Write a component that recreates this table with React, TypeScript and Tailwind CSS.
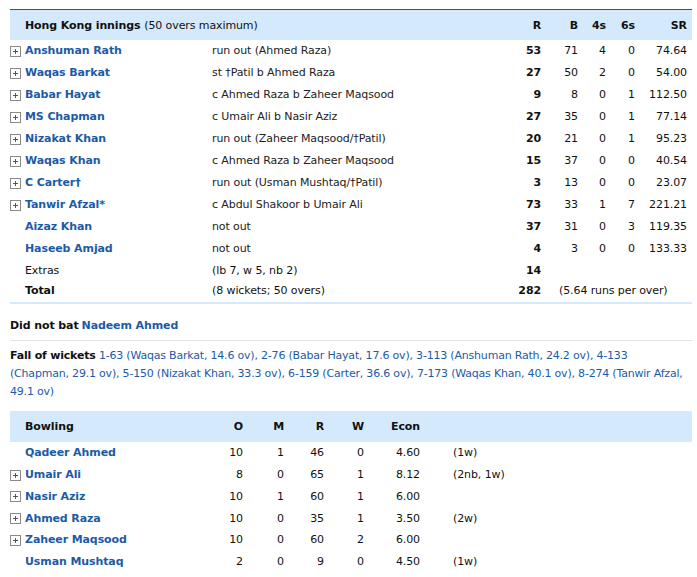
const LINK = 'text-[#1d5aa6]';

type Bat = { name: string; how: string; r: string; b: string; f: string; s: string; sr: string; plus: boolean };

const batting: Bat[] = [
  { name: 'Anshuman Rath', how: 'run out (Ahmed Raza)', r: '53', b: '71', f: '4', s: '0', sr: '74.64', plus: true },
  { name: 'Waqas Barkat', how: 'st †Patil b Ahmed Raza', r: '27', b: '50', f: '2', s: '0', sr: '54.00', plus: true },
  { name: 'Babar Hayat', how: 'c Ahmed Raza b Zaheer Maqsood', r: '9', b: '8', f: '0', s: '1', sr: '112.50', plus: true },
  { name: 'MS Chapman', how: 'c Umair Ali b Nasir Aziz', r: '27', b: '35', f: '0', s: '1', sr: '77.14', plus: true },
  { name: 'Nizakat Khan', how: 'run out (Zaheer Maqsood/†Patil)', r: '20', b: '21', f: '0', s: '1', sr: '95.23', plus: true },
  { name: 'Waqas Khan', how: 'c Ahmed Raza b Zaheer Maqsood', r: '15', b: '37', f: '0', s: '0', sr: '40.54', plus: true },
  { name: 'C Carter†', how: 'run out (Usman Mushtaq/†Patil)', r: '3', b: '13', f: '0', s: '0', sr: '23.07', plus: true },
  { name: 'Tanwir Afzal*', how: 'c Abdul Shakoor b Umair Ali', r: '73', b: '33', f: '1', s: '7', sr: '221.21', plus: true },
  { name: 'Aizaz Khan', how: 'not out', r: '37', b: '31', f: '0', s: '3', sr: '119.35', plus: false },
  { name: 'Haseeb Amjad', how: 'not out', r: '4', b: '3', f: '0', s: '0', sr: '133.33', plus: false },
];

type Bowl = { name: string; o: string; m: string; r: string; w: string; econ: string; extra: string; plus: boolean };

const bowling: Bowl[] = [
  { name: 'Qadeer Ahmed', o: '10', m: '1', r: '46', w: '0', econ: '4.60', extra: '(1w)', plus: false },
  { name: 'Umair Ali', o: '8', m: '0', r: '65', w: '1', econ: '8.12', extra: '(2nb, 1w)', plus: true },
  { name: 'Nasir Aziz', o: '10', m: '1', r: '60', w: '1', econ: '6.00', extra: '', plus: true },
  { name: 'Ahmed Raza', o: '10', m: '0', r: '35', w: '1', econ: '3.50', extra: '(2w)', plus: true },
  { name: 'Zaheer Maqsood', o: '10', m: '0', r: '60', w: '2', econ: '6.00', extra: '', plus: true },
  { name: 'Usman Mushtaq', o: '2', m: '0', r: '9', w: '0', econ: '4.50', extra: '(1w)', plus: false },
];

function Plus() {
  return (
    <svg width="11" height="11" viewBox="0 0 11 11" className="block">
      <rect x="0.5" y="0.5" width="10" height="10" fill="#fff" stroke="#8a8a8a" />
      <path d="M3 5.5h5M5.5 3v5" stroke="#555" strokeWidth="1" />
    </svg>
  );
}

export default function App() {
  return (
    <div className="w-[697px] h-[577px] bg-white text-[#111] text-[11px] tracking-[-0.1px] font-['DejaVu_Sans',sans-serif] overflow-hidden">
      <div className="pt-[9px] pl-[10px] pr-[5px]">
        {/* batting header */}
        <div className="flex items-center h-[31px] pt-[2px] border-t border-[#1e5a96] bg-[#d4eafc] font-bold">
          <div className="w-[202px] pl-[15px] whitespace-nowrap">
            Hong Kong innings <span className="font-normal">(50 overs maximum)</span>
          </div>
          <div className="w-[296px]" />
          <div className="w-[33px] text-right">R</div>
          <div className="w-[37px] text-right">B</div>
          <div className="w-[28px] text-right">4s</div>
          <div className="w-[29px] text-right">6s</div>
          <div className="w-[52px] text-right">SR</div>
        </div>

        {batting.map((p) => (
          <div key={p.name} className="flex items-center h-[22px] pt-[1px]">
            <div className="w-[15px]">{p.plus && <Plus />}</div>
            <div className={`w-[187px] font-bold ${LINK}`}>{p.name}</div>
            <div className="w-[296px] text-[#222]">{p.how}</div>
            <div className="w-[33px] text-right font-bold">{p.r}</div>
            <div className="w-[37px] text-right">{p.b}</div>
            <div className="w-[28px] text-right">{p.f}</div>
            <div className="w-[29px] text-right">{p.s}</div>
            <div className="w-[52px] text-right">{p.sr}</div>
          </div>
        ))}

        <div className="flex items-center h-[22px] pt-[1px]">
          <div className="w-[15px]" />
          <div className="w-[187px]">Extras</div>
          <div className="w-[296px]">(lb 7, w 5, nb 2)</div>
          <div className="w-[33px] text-right font-bold">14</div>
        </div>
        <div className="flex items-center h-[22px] pb-[1px] border-b-2 border-[#d4eafc]">
          <div className="w-[15px]" />
          <div className="w-[187px] font-bold">Total</div>
          <div className="w-[296px]">(8 wickets; 50 overs)</div>
          <div className="w-[33px] text-right font-bold">282</div>
          <div className="pl-[18px]">(5.64 runs per over)</div>
        </div>
      </div>

      <div className="pl-[10px] pr-[5px]">
        <div className="h-[37px] flex items-center border-b border-[#e4e4e4] pt-[9px]">
          <span className="font-bold">Did not bat</span>
          <span className={`ml-[3px] font-bold ${LINK}`}>Nadeem Ahmed</span>
        </div>

        <p className="pt-[6px] leading-[18px] whitespace-nowrap tracking-[-0.2px] text-[#1d5aa6]">
          <span className="font-bold text-[#111]">Fall of wickets</span>{' '}
          1-63 (Waqas Barkat, 14.6 ov), 2-76 (Babar Hayat, 17.6 ov), 3-113 (Anshuman Rath, 24.2 ov), 4-133
          <br />
          (Chapman, 29.1 ov), 5-150 (Nizakat Khan, 33.3 ov), 6-159 (Carter, 36.6 ov), 7-173 (Waqas Khan, 40.1 ov), 8-274 (Tanwir Afzal,
          <br />
          49.1 ov)
        </p>

        {/* bowling */}
        <div className="mt-[10px] flex items-center h-[31px] pt-[2px] bg-[#d4eafc] font-bold">
          <div className="w-[202px] pl-[15px]">Bowling</div>
          <div className="w-[31px] text-right">O</div>
          <div className="w-[41px] text-right">M</div>
          <div className="w-[40px] text-right">R</div>
          <div className="w-[40px] text-right">W</div>
          <div className="w-[56px] text-right">Econ</div>
        </div>
        {bowling.map((b) => (
          <div key={b.name} className="flex items-center h-[21.8px] pt-[1px]">
            <div className="w-[15px]">{b.plus && <Plus />}</div>
            <div className={`w-[187px] font-bold ${LINK}`}>{b.name}</div>
            <div className="w-[31px] text-right">{b.o}</div>
            <div className="w-[41px] text-right">{b.m}</div>
            <div className="w-[40px] text-right">{b.r}</div>
            <div className="w-[40px] text-right">{b.w}</div>
            <div className="w-[56px] text-right">{b.econ}</div>
            <div className="pl-[33px]">{b.extra}</div>
          </div>
        ))}
      </div>
    </div>
  );
}
